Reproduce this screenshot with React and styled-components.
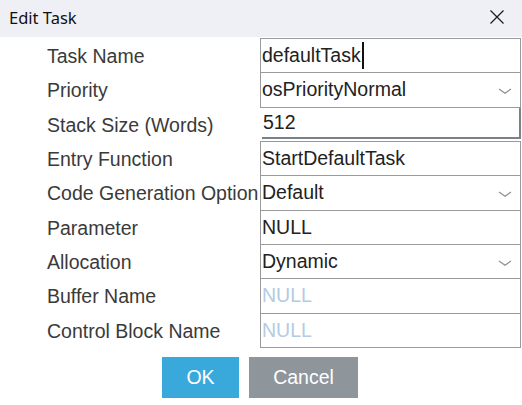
import React from "react";
import styled, { createGlobalStyle } from "styled-components";

const GlobalStyle = createGlobalStyle`
  html, body {
    margin: 0;
    padding: 0;
    background: #ffffff;
  }
  body {
    font-family: "Liberation Sans", Arial, sans-serif;
  }
`;

const Window = styled.div`
  width: 522px;
  height: 405px;
  background: #ffffff;
  overflow: hidden;
`;

const TitleBar = styled.div`
  height: 37px;
  background: #eff0f5;
  display: flex;
  align-items: center;
  justify-content: space-between;
  padding: 0 17px 0 9px;
  box-sizing: border-box;
`;

const Title = styled.div`
  font-family: "Noto Sans", "Open Sans", sans-serif;
  font-size: 16.5px;
  color: #111111;
  margin-top: -3px;
`;

const CloseButton = styled.div`
  width: 16px;
  height: 16px;
  display: flex;
  align-items: center;
  justify-content: center;
  margin-top: -3px;
`;

const Form = styled.div`
  padding: 1px 0 0 47px;
`;

const Row = styled.div`
  display: grid;
  grid-template-columns: 213px 261px;
  height: 34.33px;
`;

const Label = styled.div`
  font-size: 19.5px;
  color: #3a3a3a;
  line-height: 34px;
  padding-top: 1px;
  white-space: nowrap;
  overflow: hidden;
`;

const Field = styled.div`
  box-sizing: border-box;
  height: calc(100% + 1px);
  border: 1px solid #9a9a9a;
  background: #ffffff;
  display: flex;
  align-items: center;
  padding-left: 1px;
  font-size: 19.5px;
  color: ${(p) => (p.$placeholder ? "#b4cbe4" : "#222222")};
  position: relative;
`;

const SunkenField = styled.div`
  box-sizing: border-box;
  height: calc(100% - 2px);
  margin-left: 2px;
  border-right: 2px solid #7b8189;
  border-bottom: 2px solid #7b8189;
  display: flex;
  align-items: center;
  padding-left: 1px;
  padding-top: 1px;
  font-size: 19.5px;
  color: #222222;
`;

const Caret = styled.span`
  display: inline-block;
  width: 2px;
  height: 27px;
  background: #111111;
  margin-left: 1px;
`;

const Chevron = styled.svg`
  position: absolute;
  right: 8px;
  top: 50%;
  margin-top: -2px;
`;

const Buttons = styled.div`
  display: flex;
  justify-content: center;
  gap: 10px;
  margin-top: 10px;
  padding-right: 2px;
`;

const Button = styled.div`
  height: 41px;
  width: ${(p) => p.$width}px;
  background: ${(p) => p.$color};
  color: #ffffff;
  font-size: 19.5px;
  display: flex;
  align-items: center;
  justify-content: center;
`;

const ChevronIcon = () => (
  <Chevron width="14" height="6" viewBox="0 0 14 6">
    <polyline
      points="1,1 7,5.2 13,1"
      fill="none"
      stroke="#8f8f8f"
      strokeWidth="1.2"
    />
  </Chevron>
);

const rows = [
  { label: "Task Name", value: "defaultTask", caret: true },
  { label: "Priority", value: "osPriorityNormal", select: true },
  { label: "Stack Size (Words)", value: "512", sunken: true },
  { label: "Entry Function", value: "StartDefaultTask" },
  { label: "Code Generation Option", value: "Default", select: true },
  { label: "Parameter", value: "NULL" },
  { label: "Allocation", value: "Dynamic", select: true },
  { label: "Buffer Name", value: "NULL", placeholder: true },
  { label: "Control Block Name", value: "NULL", placeholder: true },
];

export default function App() {
  return (
    <>
      <GlobalStyle />
      <Window>
        <TitleBar>
          <Title>Edit Task</Title>
          <CloseButton>
            <svg width="14" height="14" viewBox="0 0 14 14">
              <path
                d="M0.5 0.5 L13.5 13.5 M13.5 0.5 L0.5 13.5"
                stroke="#1a1a1a"
                strokeWidth="1.2"
              />
            </svg>
          </CloseButton>
        </TitleBar>
        <Form>
          {rows.map((row) => (
            <Row key={row.label}>
              <Label>{row.label}</Label>
              {row.sunken ? (
                <SunkenField>{row.value}</SunkenField>
              ) : (
                <Field $placeholder={row.placeholder}>
                  {row.value}
                  {row.caret && <Caret />}
                  {row.select && <ChevronIcon />}
                </Field>
              )}
            </Row>
          ))}
        </Form>
        <Buttons>
          <Button $width={77} $color="#39a9dc">
            OK
          </Button>
          <Button $width={109} $color="#8e959b">
            Cancel
          </Button>
        </Buttons>
      </Window>
    </>
  );
}
